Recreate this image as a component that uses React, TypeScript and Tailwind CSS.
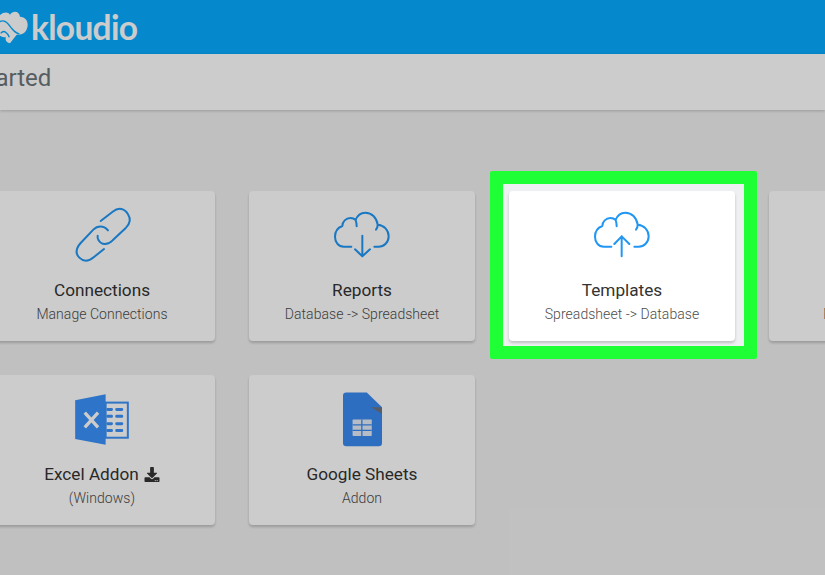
import React from "react";
import { FaDownload } from "react-icons/fa";

const CloudShape = () => (
  <path d="M320 185 L298 185 C280 185 271 170 271 155 C271 140 280 128 293 123 C293 110 304 99 317 99 C323 99 329 101 333 105 C338 91 350 83 362 83 C381 83 396 98 399 119 C418 120 432 136 432 154 C432 172 418 185 402 185 L389 185 M333 105 C335 111 336 117 336 124 M399 119 C399 125 397 130 394 134" />
);

const LinkIcon = () => (
  <svg viewBox="220 60 180 180" className="ml-[4px] h-[60px] w-[60px]" fill="none" stroke="#2196f3" strokeWidth="6" strokeLinecap="round">
    <path d="M300 108 L336 80 C354 66 372 70 382 88 C392 104 386 118 376 128 L336 166 C320 182 302 180 294 166 C290 160 290 156 291 152" />
    <path d="M322 136 C308 120 290 122 278 134 L240 174 C226 190 224 206 236 218 C250 232 266 228 280 216 L310 192" />
  </svg>
);

const DownloadCloud = () => (
  <svg viewBox="262 75 180 150" className="h-[50px] w-[60px]" fill="none" stroke="#2196f3" strokeWidth="6" strokeLinecap="round" strokeLinejoin="round">
    <CloudShape />
    <path d="M353 152 L353 214 M331 193 L353 214 L376 193" />
  </svg>
);

const UploadCloud = () => (
  <svg viewBox="262 75 180 150" className="h-[50px] w-[60px]" fill="none" stroke="#2196f3" strokeWidth="6" strokeLinecap="round" strokeLinejoin="round">
    <CloudShape />
    <path d="M351 214 L351 154 M329 177 L351 154 L374 177" />
  </svg>
);

const ExcelIcon = () => (
  <svg viewBox="220 66 174 160" className="h-[53px] w-[58px]">
    <path d="M226 88 L318 70 L318 222 L226 205 Z" fill="#3a91fa" />
    <path d="M255 125 L295 170 M295 125 L255 170" stroke="#fff" strokeWidth="10" fill="none" />
    <rect x="318" y="95" width="67" height="106" fill="none" stroke="#3a91fa" strokeWidth="6" />
    <g fill="#3a91fa">
      <rect x="320" y="111" width="20" height="9" rx="4" />
      <rect x="347" y="111" width="24" height="9" rx="4" />
      <rect x="320" y="132" width="20" height="9" rx="4" />
      <rect x="347" y="132" width="24" height="9" rx="4" />
      <rect x="320" y="154" width="20" height="9" rx="4" />
      <rect x="347" y="154" width="24" height="9" rx="4" />
      <rect x="320" y="175" width="20" height="9" rx="4" />
      <rect x="347" y="175" width="24" height="9" rx="4" />
    </g>
  </svg>
);

const SheetsIcon = () => (
  <svg viewBox="290 62 124 170" className="h-[57px] w-[41px]">
    <path d="M303 65 L365 65 L411 110 L411 218 Q411 228 401 228 L303 228 Q293 228 293 218 L293 75 Q293 65 303 65 Z" fill="#3a8af0" />
    <path d="M378 110 L411 110 L411 130 Z" fill="#6f7480" />
    <rect x="322" y="147" width="58" height="50" rx="2" fill="#e4ebf7" />
    <path d="M322 163 L380 163 M322 180 L380 180 M350 147 L350 197" stroke="#3a8af0" strokeWidth="4" />
  </svg>
);

const Card = ({
  icon,
  title,
  subtitle,
}: {
  icon?: React.ReactNode;
  title: React.ReactNode;
  subtitle: string;
}) => (
  <div className="relative flex h-[150px] w-[226px] flex-col items-center rounded bg-white shadow-[0_2px_3px_rgba(0,0,0,0.2)]">
    <div className="mt-[14px] flex h-[60px] items-center justify-center">{icon}</div>
    <div className="mt-[13px] flex h-6 items-center gap-[5px] whitespace-nowrap text-[17.2px] leading-6 text-[#333]">{title}</div>
    <div className="mt-[2px] h-5 whitespace-nowrap text-[14px] font-light leading-5 tracking-[0.05px] text-[#4d4d4d]">{subtitle}</div>
  </div>
);

export default function App() {
  return (
    <div className="relative h-[575px] w-[825px] overflow-hidden bg-[#f1f1f1] font-['Roboto',sans-serif]">
      <div className="flex h-[54px] items-center bg-[#08abff] pt-[1px]">
        <svg viewBox="0 30 90 105" className="h-[35px] w-[30px] shrink-0">
          <path d="M-12 62 C0 36 22 32 30 44 C40 30 58 34 60 50 C78 50 86 66 82 82 C78 100 64 106 50 104 L30 130 C20 128 14 120 18 112 C4 112 -8 104 -12 92 Z" fill="#fff" />
          <path d="M-8 70 C12 52 24 70 34 84 C42 94 50 100 58 102 M2 100 C12 88 22 98 28 112" fill="none" stroke="#08abff" strokeWidth="4" />
        </svg>
        <span className="ml-[1px] font-['Lato',sans-serif] text-[33.5px] font-bold leading-none tracking-[-0.7px] text-white">kloudio</span>
      </div>
      <div className="flex h-[56px] items-center overflow-hidden bg-white pb-[8px] shadow-[0_1px_3px_rgba(0,0,0,0.2)]">
        <span className="-ml-[110px] whitespace-nowrap text-2xl text-[#6c757a]">Getting Started</span>
      </div>
      <div className="-ml-[11px] mt-[81px] grid w-max grid-cols-[226px_226px_226px_226px] gap-[34px]">
        <Card icon={<LinkIcon />} title="Connections" subtitle="Manage Connections" />
        <Card icon={<DownloadCloud />} title="Reports" subtitle="Database -> Spreadsheet" />
        <div className="relative z-20">
          <div className="absolute -top-[20px] -right-[22px] -bottom-[18px] -left-[19px] rounded-[2px] border-[13px] border-[#1fff35] bg-[#eef0f1]" />
          <Card icon={<UploadCloud />} title="Templates" subtitle="Spreadsheet -> Database" />
        </div>
        <Card title="Schedules" subtitle="Manage Schedules" />
        <Card
          icon={<ExcelIcon />}
          title={
            <>
              Excel Addon <FaDownload className="h-[15px] w-[16px] text-[#333]" />
            </>
          }
          subtitle="(Windows)"
        />
        <Card icon={<SheetsIcon />} title="Google Sheets" subtitle="Addon" />
      </div>
      <div className="absolute inset-0 z-10 bg-black/20" />
    </div>
  );
}
